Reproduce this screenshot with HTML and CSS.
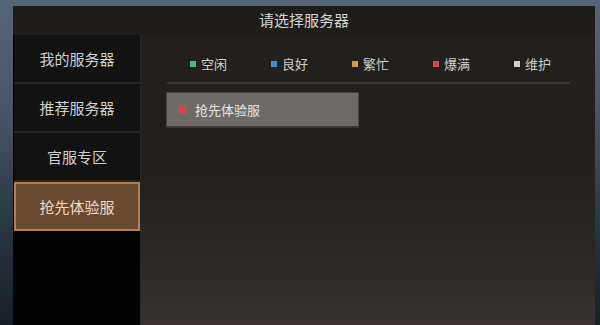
FILE: index.html
```html
<!DOCTYPE html>
<html lang="zh">
<head>
<meta charset="utf-8">
<link rel="stylesheet" href="styles.css">
</head>
<body>
<div class="scene">
  <div class="dialog">
    <div class="titlebar">请选择服务器</div>
    <div class="body">
      <nav class="sidebar">
        <div class="tab">我的服务器</div>
        <div class="tab">推荐服务器</div>
        <div class="tab">官服专区</div>
        <div class="tab active">抢先体验服</div>
      </nav>
      <main class="content">
        <div class="legend">
          <span class="lg"><i class="dot green"></i>空闲</span>
          <span class="lg"><i class="dot blue"></i>良好</span>
          <span class="lg"><i class="dot orange"></i>繁忙</span>
          <span class="lg"><i class="dot red"></i>爆满</span>
          <span class="lg"><i class="dot grey"></i>维护</span>
        </div>
        <div class="divider"></div>
        <div class="servers">
          <div class="server"><i class="dot red big"></i>抢先体验服</div>
        </div>
      </main>
    </div>
  </div>
</div>
</body>
</html>
```

FILE: styles.css
```css
* { box-sizing: border-box; }
html, body { margin: 0; padding: 0; }
body {
  width: 600px; height: 325px; overflow: hidden;
  font-family: "Noto Sans CJK SC", "Noto Sans", sans-serif;
}
.scene {
  width: 600px; height: 325px;
  background: linear-gradient(180deg, #56667a 0%, #46546a 35%, #2c3a44 65%, #162024 100%);
  padding: 6px 5px 0 13px;
  display: flex;
}
.dialog {
  flex: 1;
  min-width: 0;
  display: flex; flex-direction: column;
  background: #1f1d1a;
}
.titlebar {
  height: 29px;
  display: flex; align-items: center; justify-content: center;
  color: #d6d6d6; font-size: 15px;
  background: #1f1d1a;
  padding-bottom: 2px;
}
.body { flex: 1; display: flex; min-width: 0; }
.sidebar {
  width: 127px;
  flex-shrink: 0;
  background: #030303;
  display: flex; flex-direction: column;
  padding: 0 0 0 1px;
}
.tab {
  height: 49px;
  display: flex; align-items: center; justify-content: center;
  color: #cfcfcf; font-size: 15px;
  background: #121212;
  border-bottom: 2px solid #262626;
}
.tab.active {
  height: 49px;
  background: #6a4a31;
  border: 2px solid #b4804f;
  color: #efd9c0;
}
.content {
  flex: 1;
  min-width: 0;
  background: linear-gradient(180deg, #221f1c 0%, #221f1c 45%, #2b2724 75%, #37322f 100%);
  padding: 0 25px 0 25px;
  display: flex; flex-direction: column;
  border-left: 1px solid #2a2826;
}
.legend {
  height: 47px;
  padding: 10px 0 0 24px;
  display: flex; align-items: center;
}
.lg {
  width: 81px;
  flex-shrink: 0;
  display: flex; align-items: center;
  color: #cfcfcf; font-size: 13px;
}
.lg:last-child { width: auto; }
.dot {
  display: inline-block; width: 6px; height: 6px;
  margin-right: 5px;
}
.green { background: #3ec27a; }
.blue { background: #3f8fd0; }
.orange { background: #d39a3e; }
.red { background: #d8434c; }
.grey { background: #d2d2d2; }
.divider {
  height: 2px; background: #3a3632;
  margin: 0 0 0 1px;
}
.servers { padding-top: 8px; }
.server {
  width: 193px; height: 36px;
  background: #6e6a68;
  border: 1px solid #4b4745;
  border-bottom: 2px solid #3a3634;
  display: flex; align-items: center;
  padding-left: 12px;
  color: #e6e6e6; font-size: 13px;
}
.dot.big { width: 7px; height: 7px; margin-right: 9px; box-shadow: 0 0 1px #ff7070; }
```
